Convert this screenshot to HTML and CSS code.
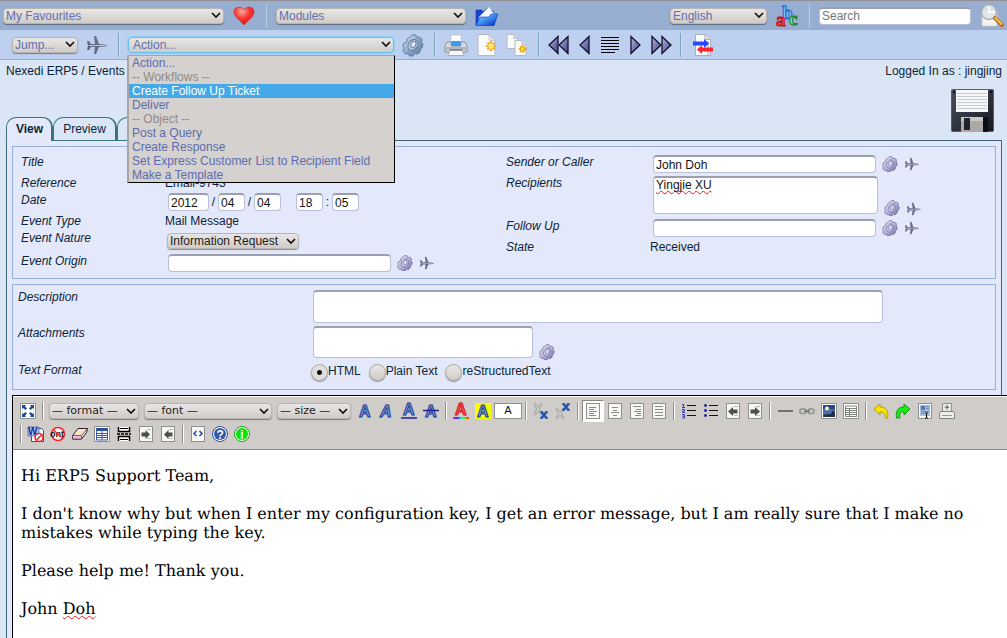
FILE: index.html
```html
<!DOCTYPE html>
<html lang="en">
<head>
<meta charset="utf-8">
<title>Nexedi ERP5 / Events</title>
<link rel="stylesheet" href="styles.css">
</head>
<body>
<svg class="sprite" aria-hidden="true">
  <defs>
    <linearGradient id="g-steel" x1="0" y1="0" x2="1" y2="1"><stop offset="0" stop-color="#e4ecf6"/><stop offset=".5" stop-color="#8ba6c8"/><stop offset="1" stop-color="#5a7898"/></linearGradient>
    <linearGradient id="g-violet" x1="0" y1="0" x2="1" y2="1"><stop offset="0" stop-color="#eeeefa"/><stop offset=".5" stop-color="#b4b4dc"/><stop offset="1" stop-color="#66669c"/></linearGradient>
    <linearGradient id="g-nav" x1="0" y1="0" x2="1" y2="1"><stop offset="0" stop-color="#b8b8e0"/><stop offset="1" stop-color="#3c3c86"/></linearGradient>
    <radialGradient id="g-heart" cx=".4" cy=".25" r=".8"><stop offset="0" stop-color="#ffb0a8"/><stop offset=".45" stop-color="#fb3b36"/><stop offset="1" stop-color="#d80c10"/></radialGradient>
    <linearGradient id="g-folder" x1="0" y1="0" x2="1" y2="1"><stop offset="0" stop-color="#a4d8ff"/><stop offset=".5" stop-color="#3a8cf6"/><stop offset="1" stop-color="#0628b0"/></linearGradient>
    <linearGradient id="g-disk" x1="0" y1="0" x2="1" y2="1"><stop offset="0" stop-color="#4a4f5c"/><stop offset="1" stop-color="#15181f"/></linearGradient>
    <linearGradient id="g-rainbow"><stop offset="0" stop-color="#f0f"/><stop offset=".3" stop-color="#33f"/><stop offset=".5" stop-color="#0ee"/><stop offset=".7" stop-color="#6e0"/><stop offset="1" stop-color="#f30"/></linearGradient>
  </defs>
  <symbol id="gear" viewBox="0 0 24 24"><path d="M9 3l2-2h4l1 3 3-1 3 3-1 3 2 2-1 4-2 1v3l-3 3-3-1-2 3h-4l-1-3-3 1-3-3 1-3-1-3 1-3 3-1 1-4z" stroke-width="1"/><ellipse cx="12" cy="12" rx="5" ry="6.500" transform="rotate(35 12 12)" fill="#fff" fill-opacity=".35" stroke-width="1"/><ellipse cx="12.500" cy="11" rx="2.500" ry="3.500" transform="rotate(35 12 11)" fill="#e3e9fa" stroke-width="1"/></symbol>
  <symbol id="plane" viewBox="0 0 20 20"><path d="M0 6h2l2 3h4L7 1h2l3 8 6 .5 2 1-2 1-6 .5-3 7H7l1-7H4l-2 3H0l1-4z"/><path d="M2 10.500h16" stroke="#c4c6d8" stroke-width="1"/></symbol>
  <symbol id="page" viewBox="0 0 16 16"><rect x="1.500" y=".5" width="13" height="15" fill="#f7f7f5" stroke="#8d908b"/></symbol>
  <symbol id="tri-left" viewBox="0 0 11 20"><path d="M10 1.500v17L1 10z" fill="url(#g-nav)" stroke="#11112a" stroke-width="1.300"/></symbol>
  <symbol id="tri-right" viewBox="0 0 11 20"><path d="M1 1.500v17L10 10z" fill="url(#g-nav)" stroke="#11112a" stroke-width="1.300"/></symbol>
</svg>

<header>
  <nav class="bar bar-main" aria-label="Main">
    <select class="pick w-fav" aria-label="Favourites"><option>My Favourites</option></select>
    <button class="icon" aria-label="Favourites"><svg viewBox="0 0 24 24"><path d="M11 21C8 17 1 13 1 8c0-5 7-7 10-2 3-5 10-3 10 2 0 5-7 9-10 13z" fill="url(#g-heart)" stroke="#e02020" stroke-width=".6"/></svg></button>
    <span class="rule"></span>
    <select class="pick w-mod" aria-label="Modules"><option>Modules</option></select>
    <button class="icon" aria-label="Open module"><svg viewBox="0 0 24 24"><path d="M1 6h6l1 2 5-4 6 4v13H1z" fill="#1747cc" stroke="#0b2fa8" stroke-width=".6"/><path d="M4 13l10-10 6 8-2 4H4z" fill="#f6f9ff" stroke="#b9cdf0" stroke-width=".5"/><path d="M1 21.500l4-8.500h9l2-3h7l-4 11.500z" fill="url(#g-folder)" stroke="#0b3ac0" stroke-width=".6"/></svg></button>
    <div class="bar-end">
      <select class="pick w-lang" aria-label="Language"><option>English</option></select>
      <button class="icon" aria-label="Change language"><svg viewBox="0 0 24 24" class="abc"><text x="6" y="15" fill="#7cc0ff" stroke="#1b62c4">b</text><text x="0" y="22" fill="#ff4040" stroke="#c00c14">a</text><text x="13" y="21" fill="#8ae88f" stroke="#137a28">c</text></svg></button>
      <span class="rule"></span>
      <input class="field w-search" type="text" placeholder="Search" aria-label="Search">
      <button class="icon" aria-label="Search"><svg viewBox="0 0 24 24"><path d="M2 7h15v15H2z" fill="#f3f3f3" stroke="#c4c8d0"/><circle cx="9" cy="8" r="7.500" fill="#dfe6ea" fill-opacity=".9" stroke="#a9adb1" stroke-width="1.500"/><path d="M9 2v6h6" stroke="#fff" stroke-width="1.500" fill="none"/><path d="M15 14l7 7" stroke="#b86c10" stroke-width="4" stroke-linecap="round"/><path d="M15.500 14l6 6" stroke="#fdc04a" stroke-width="2" stroke-linecap="round"/></svg></button>
    </div>
  </nav>

  <nav class="bar bar-context" aria-label="Context">
    <select class="pick w-jump" aria-label="Jump"><option>Jump...</option></select>
    <button class="icon plane-lg" aria-label="Jump"><svg viewBox="-1 0 24 24"><use href="#plane" x="0" y="2" width="20" height="20"/></svg></button>
    <span class="rule"></span>
    <div class="action">
      <select class="pick w-action" aria-label="Action"><option>Action...</option></select>
      <ul class="menu" role="listbox" aria-label="Actions">
        <li role="option">Action...</li>
        <li role="option" class="group">-- Workflows --</li>
        <li role="option" class="current" aria-selected="true">Create Follow Up Ticket</li>
        <li role="option">Deliver</li>
        <li role="option" class="group">-- Object --</li>
        <li role="option">Post a Query</li>
        <li role="option">Create Response</li>
        <li role="option">Set Express Customer List to Recipient Field</li>
        <li role="option">Make a Template</li>
      </ul>
    </div>
    <button class="icon gear-lg" aria-label="Run action"><svg viewBox="0 0 24 24"><use href="#gear" width="22" height="24"/></svg></button>
    <span class="rule"></span>
    <div class="docs">
      <button class="icon" aria-label="Print"><svg viewBox="0 0 24 24"><path d="M7 2h10v9H7z" fill="#fbfdff" stroke="#b0b8c8" stroke-width=".6"/><path d="M3 9h4l1 4h8l1-4h4l2 4v6H1v-6z" fill="#d9dbe0" stroke="#7e838e" stroke-width=".8"/><path d="M7.500 8h9l1 5h-11z" fill="#3a9cf0"/><path d="M2 14h20v3H2z" fill="#b2b6be"/><path d="M6 17h12l2 5.500H4z" fill="#f6f8fc" stroke="#9298a6" stroke-width=".7"/><path d="M6 17h12" stroke="#555a66"/></svg></button>
      <button class="icon" aria-label="New"><svg viewBox="0 0 24 24"><path d="M3 1.500h12l5 5v16H3z" fill="#fafbfd" stroke="#b4b8c0"/><path d="M14 1.500v6h6z" fill="#dde0e6" stroke="#b4b8c0" stroke-width=".6"/><path d="M16 8v10M11 13h10M12.500 9.500l7 7M19.500 9.500l-7 7" stroke="#f3a51d" stroke-width="2"/><circle cx="16" cy="13" r="3.200" fill="#ffe884" stroke="#f6b52c"/></svg></button>
      <button class="icon" aria-label="Clone"><svg viewBox="0 0 24 24"><path d="M1 1.500h7l4 4v10H1z" fill="#fafbfd" stroke="#b4b8c0"/><path d="M8 1.500v4h4" fill="#ddd" stroke="#b4b8c0"/><path d="M9 7.500h7l4 4v11H9z" fill="#fafbfd" stroke="#b4b8c0"/><path d="M16 7.500v4h4" fill="#ddd" stroke="#b4b8c0"/><path d="M16.500 12v8M12.500 16h8M14 13.500l5 5M19 13.500l-5 5" stroke="#e8a017" stroke-width="1.500"/><circle cx="16.500" cy="16" r="2.300" fill="#ffe23c" stroke="#e8a017"/></svg></button>
    </div>
    <span class="rule"></span>
    <div class="pager">
      <button class="nav-btn" aria-label="First"><svg width="21" height="20"><use href="#tri-left" width="11" height="20"/><use href="#tri-left" x="10" width="11" height="20"/></svg></button>
      <button class="nav-btn" aria-label="Previous"><svg width="11" height="20"><use href="#tri-left" width="11" height="20"/></svg></button>
      <button class="nav-btn" aria-label="List"><svg width="20" height="20" viewBox="0 0 20 20"><path d="M1 2.500h18M1 5.500h18M1 8.500h18M1 11.500h18M1 14.500h18M1 17.500h14" stroke="#000"/></svg></button>
      <button class="nav-btn" aria-label="Next"><svg width="11" height="20"><use href="#tri-right" width="11" height="20"/></svg></button>
      <button class="nav-btn" aria-label="Last"><svg width="21" height="20"><use href="#tri-right" width="11" height="20"/><use href="#tri-right" x="10" width="11" height="20"/></svg></button>
    </div>
    <span class="rule"></span>
    <button class="icon" aria-label="Compare"><svg viewBox="0 0 24 24"><path d="M5.500 1.500h10l5 5v16h-15z" fill="#fafbfd" stroke="#a9adb8"/><path d="M15 1.500v5h5.500" fill="#dfe2e8" stroke="#a9adb8"/><path d="M18 8v14" stroke="#9a9da6"/><path d="M3 8.500h11V6l5 4.500-5 4.500v-2.500H3z" fill="#2747ff"/><path d="M23 14.500H12V12l-5 4.500 5 4.500v-2.500h11z" fill="#ff2233"/></svg></button>
  </nav>
</header>

<div class="status">
  <a href="#">Nexedi ERP5 / Events</a>
  <span>Logged In as : jingjing</span>
</div>

<div class="tabs-row">
  <div class="tabs">
    <a href="#" class="tab active">View</a>
    <a href="#" class="tab tab-preview">Preview</a>
    <a href="#" class="tab tab-rest" aria-label="More"></a>
  </div>
  <button class="save" aria-label="Save"><svg width="43" height="43" viewBox="0 0 43 43"><rect x=".5" y=".5" width="42" height="42" rx="1" fill="url(#g-disk)" stroke="#5a5e6a"/><rect x="2" y="2" width="2" height="2" fill="#0b0c10"/><rect x="39" y="2" width="2" height="2" fill="#0b0c10"/><path d="M5 1h32v22H5z" fill="#f6f7f8"/><path d="M6 4.500h30M6 7.500h30M6 10.500h30M6 13.500h30M6 16.500h30M6 19.500h30" stroke="#c6ccd4"/><path d="M10 28h22v15H10z" fill="#aaa9a6"/><path d="M10 28h22v4H10z" fill="#c9c8c5"/><path d="M13 29h6v12h-6z" fill="#20232b"/><path d="M32 28h5v15h-5z" fill="#0c0e13"/></svg></button>
</div>

<main class="panel">
  <section class="group-box columns">
    <div>
      <div class="row"><label for="title">Title</label><div class="value"><input id="title" class="field w-text" type="text"></div></div>
      <div class="row"><span class="label">Reference</span><span class="plain">Email-9743</span></div>
      <div class="row"><label for="year">Date</label><div class="value date">
        <input id="year" class="field w-year" type="text" value="2012"><span>/</span><input class="field w-two" type="text" value="04" aria-label="Month"><span>/</span><input class="field w-two" type="text" value="04" aria-label="Day"><input class="field w-two hour" type="text" value="18" aria-label="Hour"><span>:</span><input class="field w-two" type="text" value="05" aria-label="Minute">
      </div></div>
      <div class="row"><span class="label">Event Type</span><span class="plain">Mail Message</span></div>
      <div class="row"><label for="nature">Event Nature</label><div class="value nature"><select id="nature" class="pick w-nature"><option>Information Request</option></select></div></div>
      <div class="row"><label for="origin">Event Origin</label><div class="value"><input id="origin" class="field w-text" type="text"><button class="mini" aria-label="Choose origin"><svg><use href="#gear"/></svg></button><button class="mini plane" aria-label="Go to origin"><svg><use href="#plane"/></svg></button></div></div>
    </div>
    <div>
      <div class="row"><label for="sender">Sender or Caller</label><div class="value"><input id="sender" class="field w-text" type="text" value="John Doh"><button class="mini" aria-label="Choose sender"><svg><use href="#gear"/></svg></button><button class="mini plane" aria-label="Go to sender"><svg><use href="#plane"/></svg></button></div></div>
      <div class="row"><label for="recipients">Recipients</label><div class="value tall"><textarea id="recipients" class="field area-recipients" spellcheck="false">Yingjie XU</textarea><button class="mini" aria-label="Choose recipients"><svg><use href="#gear"/></svg></button><button class="mini plane" aria-label="Go to recipients"><svg><use href="#plane"/></svg></button></div></div>
      <div class="row"><label for="follow">Follow Up</label><div class="value"><input id="follow" class="field w-text" type="text"><button class="mini" aria-label="Choose follow up"><svg><use href="#gear"/></svg></button><button class="mini plane" aria-label="Go to follow up"><svg><use href="#plane"/></svg></button></div></div>
      <div class="row"><span class="label">State</span><span class="plain">Received</span></div>
    </div>
  </section>

  <section class="group-box wide">
    <div class="row"><label for="description">Description</label><div class="value"><textarea id="description" class="field area-description"></textarea></div></div>
    <div class="row"><label for="attachments">Attachments</label><div class="value tall"><textarea id="attachments" class="field area-attachments"></textarea><button class="mini" aria-label="Choose attachments"><svg><use href="#gear"/></svg></button></div></div>
    <div class="row"><span class="label">Text Format</span><div class="radios">
      <label><input type="radio" name="fmt" checked>HTML</label>
      <label><input type="radio" name="fmt">Plain Text</label>
      <label><input type="radio" name="fmt">reStructuredText</label>
    </div></div>
  </section>

  <section class="editor">
    <div class="toolbar" role="toolbar" aria-label="Formatting">
      <div class="tools">
        <button class="tool" aria-label="Full screen"><svg viewBox="0 0 16 16"><path d="M.5.5h15v15H.5z" fill="#fff" stroke="#8d908b"/><path d="M2 2h4L5 3.200 7 5.500 5.500 7 3.200 5 2 6zM14 2v4l-1.200-1L10.500 7 9 5.500l2-2.300L10 2zM2 14v-4l1.200 1L5.500 9 7 10.500l-2 2.300L6 14zM14 14h-4l1-1.200L9 10.500 10.500 9l2.300 2 1.200-1z" fill="#204a94"/></svg></button>
        <span class="split"></span>
        <select class="pick tool-pick w-format" aria-label="Format"><option>— format —</option></select>
        <select class="pick tool-pick w-font" aria-label="Font"><option>— font —</option></select>
        <select class="pick tool-pick w-size" aria-label="Size"><option>— size —</option></select>
        <button class="tool" aria-label="Bold"><svg viewBox="0 0 16 16" class="glyph"><text x="2" y="14">A</text></svg></button>
        <button class="tool" aria-label="Italic"><svg viewBox="0 0 16 16" class="glyph slant"><text x="1" y="14">A</text></svg></button>
        <button class="tool" aria-label="Underline"><svg viewBox="0 0 16 16" class="glyph"><text x="2" y="12">A</text><path d="M0 15h16" stroke="#16268c" stroke-width="1.500"/></svg></button>
        <button class="tool" aria-label="Strikethrough"><svg viewBox="0 0 16 16" class="glyph"><text x="2" y="14">A</text><path d="M0 7.500h16" stroke="#16268c" stroke-width="1.500"/></svg></button>
        <span class="split"></span>
        <button class="tool" aria-label="Text colour"><svg viewBox="0 0 16 16" class="glyph red"><text x="2" y="12">A</text><path d="M0 14h16v2H0z" fill="url(#g-rainbow)"/></svg></button>
        <button class="tool" aria-label="Highlight"><svg viewBox="0 0 16 16" class="glyph"><path d="M0 0h16v16H0z" fill="#f4ff00"/><text x="2" y="14">A</text></svg></button>
        <button class="sample">A</button>
        <span class="split"></span>
        <button class="tool" aria-label="Subscript"><svg viewBox="0 0 16 16"><path d="M1.500.5l7 11M8.500.5l-7 11" stroke="#98a096" stroke-width="2.500"/><path d="M2 1l6 10M8 1l-6 10" stroke="#dce2da" stroke-width="1"/><path d="M8.500 9l5 6M13.500 9l-5 6" stroke="#2554a8" stroke-width="2.500"/><path d="M7 9h3M12 9h3M7 15h3M12 15h3" stroke="#2554a8" stroke-width="1.500"/></svg></button>
        <button class="tool" aria-label="Superscript"><svg viewBox="0 0 16 16"><path d="M1.500 5.500l7 10M8.500 5.500l-7 10" stroke="#98a096" stroke-width="2.500"/><path d="M2 6l6 9M8 6l-6 9" stroke="#dce2da" stroke-width="1"/><path d="M8.500 1l5 6M13.500 1l-5 6" stroke="#2554a8" stroke-width="2.500"/><path d="M7 1h3M12 1h3M7 7h3M12 7h3" stroke="#2554a8" stroke-width="1.500"/></svg></button>
        <span class="split"></span>
        <button class="tool pressed" aria-label="Align left"><svg viewBox="0 0 16 16"><use href="#page"/><path d="M4 4.500h7M4 6.500h5M4 8.500h8M4 10.500h5M4 12.500h7" stroke="#888b86"/></svg></button>
        <button class="tool" aria-label="Align center"><svg viewBox="0 0 16 16"><use href="#page"/><path d="M5 4.500h6M6 7.500h4M4 9.500h8M6 12.500h4" stroke="#888b86"/></svg></button>
        <button class="tool" aria-label="Align right"><svg viewBox="0 0 16 16"><use href="#page"/><path d="M4 3.500h8M7 6.500h5M5 8.500h7M8 10.500h4M6 12.500h6" stroke="#888b86"/></svg></button>
        <button class="tool" aria-label="Justify"><svg viewBox="0 0 16 16"><use href="#page"/><path d="M4 3.500h8M4 6.500h8M4 9.500h8M4 12.500h8" stroke="#888b86"/></svg></button>
        <span class="split"></span>
        <button class="tool" aria-label="Numbered list"><svg viewBox="0 0 16 16"><path d="M6 2.500h9M6 7.500h9M6 12.500h9" stroke="#111"/><path d="M2.500 1v3.500M1 1.500h1.500M1 4.500h3M1 6.500h2.500v1.500H1.500v1.500H4M1 11.500h2.500v3.500H1M1.500 13.200h2" stroke="#3b3bb0" fill="none"/></svg></button>
        <button class="tool" aria-label="Bulleted list"><svg viewBox="0 0 16 16"><path d="M6 2.500h9M6 7.500h9M6 12.500h9" stroke="#111"/><path d="M2.500 1v3M1 2.500h3M2.500 6v3M1 7.500h3M2.500 11v3M1 12.500h3" stroke="#2727a8" stroke-width="1.500"/></svg></button>
        <button class="tool" aria-label="Outdent"><svg viewBox="0 0 16 16"><use href="#page"/><path d="M9 3.500h4M9 12.500h4" stroke="#bbb"/><path d="M3 8.500l5-4.500v2.500h4.500v4H8V13z" fill="#4b504b"/></svg></button>
        <button class="tool" aria-label="Indent"><svg viewBox="0 0 16 16"><use href="#page"/><path d="M9 3.500h4M9 12.500h4" stroke="#bbb"/><path d="M13 8.500L8 4v2.500H3.500v4H8V13z" fill="#4b504b"/></svg></button>
        <span class="split"></span>
        <button class="tool" aria-label="Horizontal rule"><svg viewBox="0 0 16 16"><path d="M1 8h15" stroke="#333" stroke-width="1.200"/></svg></button>
        <button class="tool" aria-label="Link"><svg viewBox="0 0 16 16" fill="none"><rect x="1" y="6" width="6" height="4.500" rx="2" stroke="#8b938b" stroke-width="1.500"/><rect x="9" y="6" width="6" height="4.500" rx="2" stroke="#8b938b" stroke-width="1.500"/><path d="M5 8.200h6" stroke="#6f776f" stroke-width="1.500"/></svg></button>
        <button class="tool" aria-label="Image"><svg viewBox="0 0 16 16"><path d="M.5.500h15v15H.5z" fill="#fff" stroke="#8d908b"/><path d="M2 2h12v12H2z" fill="#4a6cb0"/><path d="M2 2h12v4H2z" fill="#2b4684"/><circle cx="6" cy="5.500" r="2" fill="#f4ffb0"/><path d="M2 12l5-1 3 0 2-4 2 3v4H2z" fill="#252f48"/></svg></button>
        <button class="tool" aria-label="Table"><svg viewBox="0 0 16 16"><path d="M.5.500h15v15H.5z" fill="#fff" stroke="#8d908b"/><path d="M2.500 3h11v10.500h-11zM2.500 5.500h11M2.500 7.500h11M2.500 9.500h11M2.500 11.500h11M6.500 5v8" fill="none" stroke="#80857f"/></svg></button>
        <span class="split"></span>
        <button class="tool" aria-label="Undo"><svg viewBox="0 0 16 16"><path d="M1 6l6-5v3c6 0 9 4 7.500 11H12c1-5-1-6.500-5-6V12z" fill="#f8e800" stroke="#b59c00"/></svg></button>
        <button class="tool" aria-label="Redo"><svg viewBox="0 0 16 16"><path d="M15 6L9 1v3C3 4 .5 8 1.500 15H5c-1-5 0-6.500 4-6v3z" fill="#12f012" stroke="#179417"/></svg></button>
        <button class="tool" aria-label="Select all"><svg viewBox="0 0 16 16"><use href="#page"/><path d="M3 2h10v11H3z" fill="#a8c0e0"/><path d="M4 3h4v4H4z" fill="#5378b0"/><path d="M9 3.500h3M9 5.500h3M4 8.500h8M4 10.500h4" stroke="#6687b8"/><path d="M8 9.500l1.500 1 1.500-1M9.500 10.500V15M8 15.500l1.500-1 1.500 1" stroke="#000" fill="none"/></svg></button>
        <button class="tool" aria-label="Print"><svg viewBox="0 0 16 16"><path d="M3.500.5h9v8h-9z" fill="#e8e8e6" stroke="#8d908b"/><path d="M8 2l2.500 3h-2v2h-1V5h-2z" fill="#777"/><path d="M1.500 8.500h13l1 2v5H.5v-5z" fill="#eeeeec" stroke="#7f827d"/><path d="M3 12.500h10" stroke="#999"/></svg></button>
      </div>
      <div class="tools">
        <span class="split"></span>
        <button class="tool" aria-label="Clean Word HTML"><svg viewBox="0 0 16 16"><path d="M3.500 2.500h10l2 2v11h-12z" fill="#fff" stroke="#3548a0"/><path d="M0 1h11v9H0z" fill="#b9c6f0" stroke="#27389a" stroke-width=".6"/><text x="0" y="9" font-size="10" font-weight="bold" fill="#1c2a8e">W</text><circle cx="11" cy="11.500" r="4" fill="#fff" stroke="#e22" stroke-width="1.500"/><path d="M8.500 14l5-5" stroke="#e22" stroke-width="1.500"/></svg></button>
        <button class="tool" aria-label="Clear fonts"><svg viewBox="0 0 16 16"><circle cx="8" cy="8" r="6.500" fill="#fff" stroke="#f22" stroke-width="1.500"/><text x="0" y="11" font-size="9" font-weight="bold" fill="#111">ont</text><path d="M3.500 4l9 8.500" stroke="#f22" stroke-width="1.300"/></svg></button>
        <button class="tool" aria-label="Erase"><svg viewBox="0 0 16 16"><path d="M6 2.500h9.500l-1 4-5 6.500h-9l.5-4z" fill="#f3e6c0" stroke="#2b1d38"/><path d="M.5 9.500h9v3.500h-9z" fill="#f2b8dc" stroke="#2b1d38" stroke-width=".6"/><path d="M9.500 9.500l6-7" stroke="#6f5a70"/></svg></button>
        <button class="tool" aria-label="Insert table"><svg viewBox="0 0 16 16"><path d="M.5.500h15v15H.5z" fill="#fff" stroke="#8d908b"/><path d="M2 2h12v3H2z" fill="#2d4f9a"/><path d="M2.500 3v11h11V3M2.500 7.500h11M2.500 9.500h11M2.500 11.500h11M8 5v9" fill="none" stroke="#3b5da8"/></svg></button>
        <button class="tool" aria-label="Page break"><svg viewBox="0 0 16 16"><path d="M2.500 1v4.500h11V1M2.500 15v-4.500h11V15" fill="#fff" stroke="#000" stroke-width="1.500"/><path d="M1 8h14" stroke="#000" stroke-width="1.500" stroke-dasharray="3 1"/><path d="M4 2.500h8M4 13.500h8" stroke="#000"/></svg></button>
        <button class="tool" aria-label="Left to right"><svg viewBox="0 0 16 16"><use href="#page"/><path d="M9 3.500h4M9 12.500h4" stroke="#bbb"/><path d="M12 8.500L7.500 4v2.500H3.500v4h4V13z" fill="#4b504b"/></svg></button>
        <button class="tool" aria-label="Right to left"><svg viewBox="0 0 16 16"><use href="#page"/><path d="M9 3.500h4M9 12.500h4" stroke="#bbb"/><path d="M4 8.500L8.500 4v2.500h4v4h-4V13z" fill="#4b504b"/></svg></button>
        <span class="split"></span>
        <button class="tool" aria-label="Source"><svg viewBox="0 0 16 16"><use href="#page"/><path d="M6.500 5L4 7.500 6.500 10M9.500 5L12 7.500 9.500 10" fill="none" stroke="#204a94" stroke-width="1.500"/></svg></button>
        <button class="tool" aria-label="Help"><svg viewBox="0 0 16 16"><circle cx="8" cy="8" r="7.500" fill="#fff" stroke="#2b4a9a"/><circle cx="8" cy="8" r="6" fill="#3558a8"/><text x="4.500" y="12.500" font-size="12" font-weight="bold" fill="#fff">?</text></svg></button>
        <button class="tool" aria-label="About"><svg viewBox="0 0 16 16"><circle cx="8" cy="8" r="7.500" fill="#fff" stroke="#12a812"/><circle cx="8" cy="8" r="6" fill="#08e408"/><text x="6.300" y="12.500" font-size="12" font-weight="bold" fill="#fff">i</text></svg></button>
      </div>
    </div>
    <div class="message" contenteditable="true" spellcheck="false" role="textbox" aria-label="Message">
      <p>Hi ERP5 Support Team,</p>
      <p>I don't know why but when I enter my configuration key, I get an error message, but I am really sure that I make no mistakes while typing the key.</p>
      <p>Please help me! Thank you.</p>
      <p>John <span class="misspelt">Doh</span></p>
    </div>
  </section>
</main>
</body>
</html>
```

FILE: styles.css
```css
* { box-sizing: border-box; }

body {
  margin: 0;
  min-height: 100vh;
  display: flex;
  flex-direction: column;
  background: #dae6f6;
  color: #0c2438;
  font: 12px/14px "Liberation Sans", Arial, sans-serif;
}

button, input, select, textarea { font: inherit; color: inherit; margin: 0; }
button { padding: 0; border: 0; background: none; display: block; flex: none; }
svg { display: block; overflow: visible; }
a { color: inherit; text-decoration: none; }
.sprite { position: absolute; width: 0; height: 0; }

/* Bars */
.bar { display: flex; align-items: center; height: 30px; }
.bar-main { gap: 9px; padding: 0 3px; background: #98aed0; border-top: 1px solid #948f92; }
.bar-context { gap: 8px; padding: 0 12px; background: #bdd0f0; border-bottom: 1px solid #94acd2; }
.bar-end { display: flex; align-items: center; gap: 9px; margin-left: auto; }
.rule { flex: none; width: 1px; height: 24px; background: #b4d2e0; }
.bar-context .rule { width: 2px; background: #7ba3b8; border-right: 1px solid #cfdef5; }
.icon, .icon svg { width: 24px; height: 24px; }
.docs { display: flex; gap: 7px; }
.pager { display: flex; gap: 10px; }
.plane-lg { fill: #686b88; }
.gear-lg { fill: url(#g-steel); stroke: #5d7b9d; }
.abc text { font: bold 19px "Liberation Serif", serif; stroke-width: 1px; }

.pick {
  appearance: none;
  flex: none;
  height: 16px;
  padding: 0 16px 0 2px;
  border: 1px solid #b9b5b1;
  border-radius: 4px;
  color: #6270b0;
  line-height: 14px;
  background: url("data:image/svg+xml,%3Csvg xmlns='http://www.w3.org/2000/svg' width='10' height='7'%3E%3Cpath d='M1 1l4 4 4-4' fill='none' stroke='%23111' stroke-width='1.700'/%3E%3C/svg%3E") right 2px center no-repeat, linear-gradient(#e8e6e4, #d0ccc8);
  box-shadow: 0 1px 1px #00000066;
}
.w-fav { width: 221px; }
.w-mod { width: 190px; }
.w-lang { width: 97px; }
.w-jump { width: 66px; }
.w-action { width: 266px; display: block; border-color: #62c2f4; box-shadow: 0 0 1px 1px #8ad2fa; padding-left: 4px; }
.w-nature { width: 132px; color: #1c1c1c; }

.field {
  appearance: none;
  height: 18px;
  padding: 1px 2px;
  border: 1px solid #b9bfd6;
  border-top: 2px solid #9ca0ae;
  border-radius: 4px;
  background: #fff;
  color: #111;
  outline: 0;
}
.w-search { width: 152px; }
.w-search::placeholder { color: #777; opacity: 1; }
.w-text { width: 223px; }
.w-year { width: 41px; }
.w-two { width: 27px; }

/* Open action list */
.action { position: relative; }
.menu {
  position: absolute;
  z-index: 5;
  top: 100%;
  left: -1px;
  width: 268px;
  margin: 2px 0 0;
  padding: 0;
  list-style: none;
  background: #d5d1ce;
  border: 1px solid #000;
  border-top-color: #a8a5a2;
  border-left: 2px solid #a6a6a6;
  color: #5c6cae;
}
.menu li { padding: 0 3px; line-height: 14px; }
.menu .group { color: #8f8b88; }
.menu .current { background: #43a9e8; color: #fff; }

/* Breadcrumb and tabs */
.status { display: flex; justify-content: space-between; padding: 0 5px 7px 6px; line-height: 22px; }
.tabs-row { display: flex; justify-content: space-between; align-items: flex-end; padding: 0 13px 0 6px; }
.tabs { display: flex; }
.tab {
  position: relative;
  height: 24px;
  margin-bottom: -1px;
  padding: 0 9px;
  border: 1px solid #3a7474;
  border-right-width: 2px;
  border-radius: 10px 10px 0 0;
  line-height: 23px;
}
.tab.active { border-bottom: 0; padding-right: 8px; background: #e3e9fa; font-weight: bold; }
.tab-rest { width: 80px; }
.save { margin-bottom: 8px; }

/* Form */
.panel {
  flex: 1;
  display: flex;
  flex-direction: column;
  gap: 5px;
  margin: 0 5px 0 6px;
  padding: 5px 5px 0;
  border: 1px solid #3f6479;
  border-bottom: 0;
  background: #e3e9fa;
}
.group-box { border: 1px solid #98b0d6; padding: 6px 4px 5px 8px; }
.columns { display: grid; grid-template-columns: 1fr 1fr; }
.row { display: flex; align-items: flex-start; }
.row > label, .label { flex: none; width: 144px; height: 17px; font-style: italic; line-height: 19px; }
.plain { height: 17px; line-height: 19px; }
.value { display: flex; align-items: center; margin: 2px 0 1px 3px; height: 18px; }
.date span { width: 9px; text-align: center; }
.hour { margin-left: 15px; }
.nature { height: 20px; margin-left: 2px; }
.mini, .mini svg { width: 16px; height: 16px; }
.mini { margin-left: 6px; fill: url(#g-violet); stroke: #66669a; }
.mini.plane, .mini.plane svg { width: 14px; height: 14px; }
.mini.plane { margin-left: 7px; fill: #686b88; stroke: none; }
.value.tall { height: auto; align-items: flex-end; margin-bottom: 3px; }
.tall .mini { margin-bottom: -2px; }
textarea.field { display: block; resize: none; overflow: hidden; line-height: 14px; padding-top: 0; }
.area-recipients { width: 225px; height: 38px; text-decoration: underline wavy #e02020 1px; text-decoration-skip-ink: none; }

.wide { padding: 3px 5px 6px; }
.wide .row > label, .wide .label { width: 292px; }
.wide .value { height: auto; }
.area-description { width: 570px; height: 33px; }
.area-attachments { width: 220px; height: 32px; }
.radios { display: flex; gap: 8px; height: 22px; padding-left: 1px; }
.radios label { display: flex; line-height: 20px; }
.radios input {
  appearance: none;
  width: 17px;
  height: 17px;
  margin: 3px 0 0;
  border: 1px solid #aaa6a2;
  border-radius: 50%;
  background: linear-gradient(#e8e6e4, #d0ccc8);
  box-shadow: 0 1px 1px #00000066;
}
.radios input:checked { background: radial-gradient(circle, #111 2px, #e0dedb 3px); }

/* Editor */
.editor {
  flex: 1;
  display: flex;
  flex-direction: column;
  margin-right: -11px;
  border-top: 1px solid #000;
  border-left: 1px solid #000;
  background: #fff;
}
.toolbar {
  display: grid;
  gap: 1px;
  padding: 3px 4px 4px;
  background: #d0ccc9;
  border-top: 1px solid #fff;
  border-bottom: 1px solid #8e8c8a;
}
.tools { display: flex; align-items: center; height: 22px; }
.tool { width: 22px; height: 22px; padding: 3px; }
.tool svg { width: 16px; height: 16px; }
.tool.pressed { background: #fff; border: 1px solid #fff; border-top-color: #888; border-left-color: #888; padding: 2px; }
.split { flex: none; width: 2px; height: 18px; margin: 0 3px; background: #8f8f8b; border-right: 1px solid #fff; }
.tool-pick { margin: 0 3px 0 2px; color: #222; font: 11px/14px "DejaVu Sans", sans-serif; }
.w-format { width: 90px; }
.w-font { width: 128px; }
.w-size { width: 74px; }
.glyph text { font: bold 16px "Liberation Sans", Arial, sans-serif; fill: #7aa4e4; stroke: #1c3a96; stroke-width: 1px; }
.glyph.slant text { font-style: italic; }
.glyph.red text { fill: #ff5a5a; stroke: #d01018; }
.sample { width: 28px; height: 16px; background: #fff; border: 1px solid #8d908b; color: #111; font: 11px/14px "DejaVu Sans", sans-serif; }

.message {
  flex: 1;
  padding: 16px 8px;
  color: #000;
  font: 16px/19px "DejaVu Serif", serif;
  text-rendering: geometricPrecision;
  outline: 0;
}
.message p { margin: 0 0 19px; }
.message p:last-child { margin: 0; }
.misspelt { text-decoration: underline wavy #e02020 1px; text-decoration-skip-ink: none; }
```
